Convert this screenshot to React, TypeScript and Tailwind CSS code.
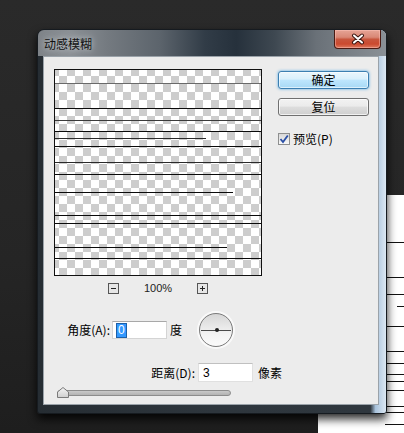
import React from "react";

const previewLines: { y: number; w?: number; c?: string }[] = [
  { y: 14, c: "#6a6a6a" },
  { y: 39 },
  { y: 51, c: "#3a3a3a" },
  { y: 62 },
  { y: 69, w: 152, c: "#2a2a2a" },
  { y: 77 },
  { y: 93, c: "#2a2a2a" },
  { y: 105 },
  { y: 123, w: 179 },
  { y: 146 },
  { y: 154 },
  { y: 178, w: 173 },
  { y: 189 },
];

const docLines: { y: number; x?: number }[] = [
  { y: 47 },
  { y: 82 },
  { y: 99 },
  { y: 111, x: 79 },
  { y: 131 },
  { y: 156 },
  { y: 168 },
  { y: 179 },
  { y: 186 },
  { y: 195 },
  { y: 211 },
  { y: 217, x: 67 },
  { y: 229, x: 67 },
];

function Preview() {
  return (
    <svg width="208" height="207" className="block shrink-0" shapeRendering="crispEdges">
      <defs>
        <pattern id="chk" x="-3" y="-1" width="16" height="16" patternUnits="userSpaceOnUse">
          <rect width="16" height="16" fill="#ffffff" />
          <rect width="8" height="8" fill="#cdcdcd" />
          <rect x="8" y="8" width="8" height="8" fill="#cdcdcd" />
        </pattern>
      </defs>
      <rect x="0" y="0" width="208" height="207" fill="url(#chk)" />
      {previewLines.map((l, i) => (
        <rect key={i} x="1" y={l.y} width={l.w ? l.w - 1 : 206} height="1" fill={l.c ?? "#0a0a0a"} />
      ))}
      <rect x="0.5" y="0.5" width="207" height="206" fill="none" stroke="#111" strokeWidth="1" />
    </svg>
  );
}

function CloseButton() {
  return (
    <div className="w-[47px] h-[19px] mr-[5px] rounded-b-[4px] border border-t-0 border-[#4a1a12] bg-[linear-gradient(to_bottom,#e6a496_0%,#d98876_40%,#c8553d_52%,#cb4a2f_78%,#dd7a5f_100%)] shadow-[inset_0_0_0_1px_rgba(255,200,190,0.45)] flex items-center justify-center">
      <svg width="14" height="12" viewBox="0 0 14 12">
        <path d="M3 2.5 L11 9.5 M11 2.5 L3 9.5" stroke="#3b1610" strokeWidth="4" strokeLinecap="round" />
        <path d="M3 2.5 L11 9.5 M11 2.5 L3 9.5" stroke="#ffffff" strokeWidth="2" strokeLinecap="round" />
      </svg>
    </div>
  );
}

function Checkbox() {
  return (
    <div className="w-[12px] h-[12px] border border-[#8e8f8f] bg-[linear-gradient(to_bottom,#d8d8d8,#f8f8f8)] flex items-center justify-center shrink-0">
      <svg width="10" height="10" viewBox="0 0 10 10">
        <path d="M1.5 5 L4 8 L8.8 1.5" fill="none" stroke="#2a4fa6" strokeWidth="1.8" />
      </svg>
    </div>
  );
}

function Dial() {
  return (
    <div className="relative w-[34px] h-[34px] rounded-full border border-[#7b7b7b] bg-[linear-gradient(to_bottom,#d6d6d6,#f2f2f2_60%,#fbfbfb)] shadow-[0_0_0_2px_rgba(255,255,255,0.7)] shrink-0">
      <div className="absolute left-[1px] right-[1px] top-[15.5px] h-[1px] bg-[#4a4a4a]" />
      <div className="absolute left-[14.5px] top-[14px] w-[4px] h-[4px] rounded-full bg-[#222]" />
    </div>
  );
}

function SmallBox({ plus }: { plus?: boolean }) {
  return (
    <div className="relative w-[11px] h-[11px] border border-[#555] bg-[#e6e6e6] shrink-0">
      <div className="absolute left-[2px] top-[4px] w-[5px] h-[1px] bg-[#222]" />
      {plus && <div className="absolute left-[4px] top-[2px] w-[1px] h-[5px] bg-[#222]" />}
    </div>
  );
}

export default function App() {
  return (
    <div className="relative w-[404px] h-[433px] overflow-hidden bg-[linear-gradient(to_bottom,#2a2a2a,#252525_60%,#1e1e1e)] font-['Noto_Sans_CJK_SC',sans-serif] text-[12px] leading-none text-black">
      {/* document behind the dialog */}
      <div className="absolute left-[318px] top-[195px] right-0 bottom-0 bg-white">
        <svg width="86" height="238" className="block" shapeRendering="crispEdges">
          {docLines.map((l, i) => (
            <rect key={i} x={l.x ?? 0} y={l.y} width={86 - (l.x ?? 0)} height="1" fill="#111" />
          ))}
        </svg>
      </div>

      {/* dialog window */}
      <div className="absolute left-[37px] top-[29px] w-[350px] h-[385px] flex flex-col overflow-hidden rounded-t-[7px] rounded-b-[3px] border border-[#161b20] bg-[linear-gradient(to_right,#262d33_0%,#2e363d_50%,#2f373e_95.5%,#a9c3dc_97%,#dce8f3_100%)] shadow-[0_5px_10px_rgba(0,0,0,0.85)]">
        {/* title bar */}
        <div className="h-[26px] shrink-0 flex items-start justify-between bg-[linear-gradient(to_right,#7e8388_0%,#8b9095_9%,#747a80_20%,#5c646c_35%,#313c47_48%,#26313c_57%,#3e4851_68%,#6a7178_80%,#8a9096_100%)]">
          <span className="mt-[8px] ml-[6px] text-[12px] text-[#111] [text-shadow:0_0_6px_rgba(230,235,240,0.9)]">动感模糊</span>
          <CloseButton />
        </div>

        {/* body */}
        <div className="flex-1 flex pl-[5px] pr-[7px] pb-[8px]">
          <div className="flex-1 flex flex-col border border-[#9aa2a9] bg-[#ececec] pl-[10px] pt-[12px]">
            {/* preview + buttons */}
            <div className="flex items-start">
              <Preview />
              <div className="ml-[16px] pt-[2px] flex flex-col">
                <button className="w-[91px] h-[18px] rounded-[3px] border border-[#3c7fb1] bg-[linear-gradient(to_bottom,#eaf6fd_0%,#d9f0fc_45%,#bee6fd_50%,#a7d9f5_100%)] shadow-[0_0_3px_rgba(60,160,230,0.9),inset_0_0_0_1px_rgba(255,255,255,0.6)] flex items-center justify-center text-[12px] text-black">
                  确定
                </button>
                <button className="mt-[9px] w-[91px] h-[18px] rounded-[3px] border border-[#707070] bg-[linear-gradient(to_bottom,#f2f2f2_0%,#ebebeb_45%,#dddddd_50%,#cfcfcf_100%)] shadow-[inset_0_0_0_1px_rgba(255,255,255,0.7)] flex items-center justify-center text-[12px] text-black">
                  复位
                </button>
                <div className="mt-[17px] flex items-center gap-[3px]">
                  <Checkbox />
                  <span className="text-[12px]">预览(P)</span>
                </div>
              </div>
            </div>

            {/* zoom controls */}
            <div className="mt-[7px] w-[208px] flex items-center justify-center gap-[25px] h-[11px]">
              <SmallBox />
              <span className="font-['Liberation_Sans',sans-serif] text-[11px] text-[#222]">100%</span>
              <SmallBox plus />
            </div>

            {/* angle row */}
            <div className="mt-[19px] h-[34px] flex items-center">
              <span className="ml-[8px] w-[48px] whitespace-nowrap text-right">角度(A):</span>
              <div className="ml-[2px] w-[55px] h-[18px] bg-white border border-[#d4d4d4] border-t-[#a8a8a8] flex items-center pl-[4px]">
                <span className="bg-[#3399ff] text-white font-['Liberation_Sans',sans-serif] text-[12px] leading-[13px] px-[1px] outline outline-1 outline-[#1c5fa8]">0</span>
              </div>
              <span className="ml-[3px]">度</span>
              <div className="ml-[17px]">
                <Dial />
              </div>
            </div>

            {/* distance row */}
            <div className="mt-[16px] h-[19px] flex items-center">
              <span className="ml-[94px] w-[47px] whitespace-nowrap text-right">距离(D):</span>
              <div className="ml-[3px] w-[55px] h-[19px] bg-white border border-[#e0e0e0] border-t-[#c0c0c0] flex items-center pl-[4px]">
                <span className="font-['Liberation_Sans',sans-serif] text-[12px]">3</span>
              </div>
              <span className="ml-[5px] whitespace-nowrap">像素</span>
            </div>

            {/* slider */}
            <div className="mt-[5px] ml-[3px] relative w-[174px] h-[10px]">
              <div className="absolute left-0 right-0 top-[3px] h-[6px] rounded-[3px] border border-[#8c8c8c] bg-[linear-gradient(to_bottom,#c9c9c9,#b3b3b3)]" />
              <svg width="12" height="11" viewBox="0 0 12 11" className="absolute left-0 top-0">
                <defs>
                  <linearGradient id="th" x1="0" y1="0" x2="0" y2="1">
                    <stop offset="0" stopColor="#f4f4f4" />
                    <stop offset="1" stopColor="#cfcfcf" />
                  </linearGradient>
                </defs>
                <polygon points="0.5,10.5 0.5,5 6,0.5 11.5,5 11.5,10.5" fill="url(#th)" stroke="#7a7a7a" strokeWidth="1" />
              </svg>
            </div>
          </div>
        </div>
      </div>
    </div>
  );
}
